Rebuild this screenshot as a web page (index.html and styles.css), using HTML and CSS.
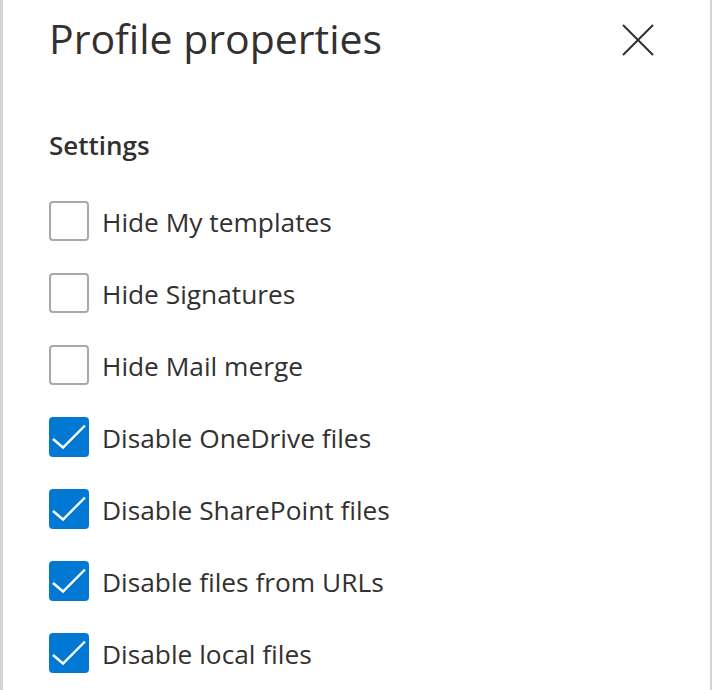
FILE: index.html
```html
<!DOCTYPE html>
<html lang="en">
<head>
   <meta charset="UTF-8">
   <meta name="viewport" content="width=device-width, initial-scale=1.0">
   <title>Profile properties</title>
   <link rel="stylesheet" href="styles.css">
</head>
<body>
   <div class="panel">
       <div class="panel-header">
           <h1 class="panel-title">Profile properties</h1>
           <button class="close-button" aria-label="Close">
               <svg width="32" height="32" viewBox="0 0 32 32">
                   <path d="M1 1 L31 31 M31 1 L1 31" stroke="#323130" stroke-width="2" fill="none"/>
               </svg>
           </button>
       </div>

       <div class="panel-content">
           <h2 class="section-title">Settings</h2>

           <ul class="options">
               <li class="option">
                   <span class="box"></span>
                   <span class="label">Hide My templates</span>
               </li>
               <li class="option">
                   <span class="box"></span>
                   <span class="label">Hide Signatures</span>
               </li>
               <li class="option">
                   <span class="box"></span>
                   <span class="label">Hide Mail merge</span>
               </li>
               <li class="option checked">
                   <span class="box"><svg viewBox="0 0 40 40"><polyline points="4,22 14,30.5 36,8.5"/></svg></span>
                   <span class="label">Disable OneDrive files</span>
               </li>
               <li class="option checked">
                   <span class="box"><svg viewBox="0 0 40 40"><polyline points="4,22 14,30.5 36,8.5"/></svg></span>
                   <span class="label">Disable SharePoint files</span>
               </li>
               <li class="option checked">
                   <span class="box"><svg viewBox="0 0 40 40"><polyline points="4,22 14,30.5 36,8.5"/></svg></span>
                   <span class="label">Disable files from URLs</span>
               </li>
               <li class="option checked">
                   <span class="box"><svg viewBox="0 0 40 40"><polyline points="4,22 14,30.5 36,8.5"/></svg></span>
                   <span class="label">Disable local files</span>
               </li>
           </ul>
       </div>
   </div>
</body>
</html>
```

FILE: styles.css
```css
body {
    margin: 0;
    background-color: #ffffff;
    font-family: 'Open Sans', 'Noto Sans', sans-serif;
    color: #323130;
}

.panel {
    box-sizing: border-box;
    min-height: 100vh;
    border-left: 3px solid #d4d4d4;
    border-right: 2px solid #d4d4d4;
    background-color: #ffffff;
    overflow: hidden;
}

.panel-header {
    display: flex;
    justify-content: space-between;
    align-items: center;
    padding: 10px 55px 0 46px;
}

.panel-title {
    margin: 0;
    font-size: 41px;
    font-weight: 400;
    line-height: 56px;
}

.close-button {
    width: 34px;
    height: 34px;
    margin-top: 3px;
    padding: 1px;
    border: none;
    background: none;
    cursor: pointer;
}

.close-button svg {
    display: block;
}

.panel-content {
    padding: 61px 0 0 46px;
}

.section-title {
    margin: 0 0 38px;
    font-size: 26px;
    font-weight: 600;
    line-height: 36px;
}

.options {
    list-style: none;
    margin: 0;
    padding: 0;
    display: flex;
    flex-direction: column;
    gap: 32px;
}

.option {
    display: flex;
    align-items: center;
    gap: 13px;
    height: 40px;
}

.box {
    box-sizing: border-box;
    width: 40px;
    height: 40px;
    border: 2px solid #a8a8a8;
    border-radius: 4px;
    flex-shrink: 0;
}

.option.checked .box {
    border: none;
    background-color: #0078d4;
}

.box svg {
    display: block;
    width: 40px;
    height: 40px;
}

.box polyline {
    fill: none;
    stroke: #ffffff;
    stroke-width: 2.4;
}

.label {
    padding-top: 2px;
    font-size: 26.3px;
    line-height: 40px;
}
```
